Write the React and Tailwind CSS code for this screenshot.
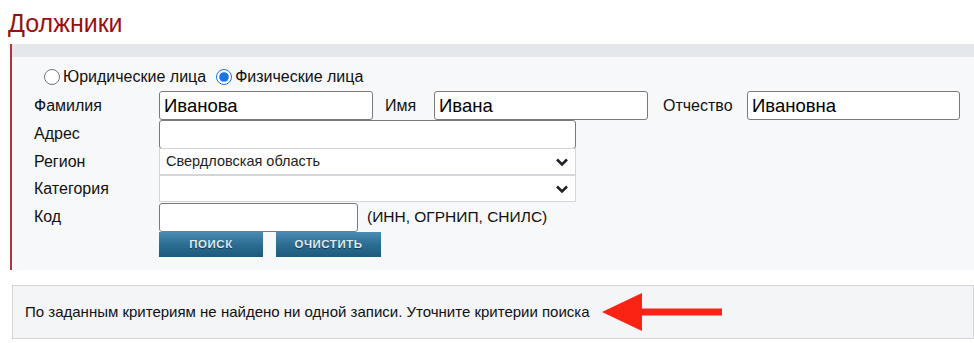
import React, { useState } from 'react';

const labelCls = 'w-[125px] shrink-0 text-[16px] text-[#111]';
const inputCls =
  'h-[29px] border border-[#7a7a7a] rounded-[3px] bg-white px-[4px] text-[18.5px] text-black outline-none';

const Select = ({ value, width }) => (
  <div
    className={`${width} h-[27px] border border-[#d4d6da] bg-white flex items-center justify-between pl-[6px] pr-[6px] text-[14.5px] text-[#222]`}
  >
    <span>{value}</span>
    <svg width="14" height="10" viewBox="0 0 14 10">
      <path d="M2 2.5 L7 7.5 L12 2.5" fill="none" stroke="#222" strokeWidth="2.6" />
    </svg>
  </div>
);

const Button = ({ children, width }) => (
  <button
    className={`${width} h-[25px] bg-gradient-to-b from-[#4a8cb4] via-[#2c6d93] to-[#1d5a7c] text-[#dfe8ee] text-[11.5px] font-bold tracking-[0.5px] [text-shadow:0_1px_1px_rgba(0,0,0,0.5)]`}
  >
    {children}
  </button>
);

export default function App() {
  const [type, setType] = useState('fiz');

  return (
    <div className="w-[974px] h-[343px] bg-white overflow-hidden" style={{ fontFamily: '"Liberation Sans", Arial, sans-serif' }}>
      {/* Title */}
      <h1 className="h-[44px] pl-[8px] pt-[8px] text-[25px] leading-[30px] text-[#990f0f]">
        Должники
      </h1>

      {/* Search panel */}
      <div className="ml-[10px] border-l-2 border-[#b7323a]">
        <div className="h-[13px] bg-[#e4e7eb]" />
        <div className="bg-[#f7f8fa] pl-[22px] pt-[7px] h-[213px]">
          {/* Radios */}
          <div className="flex items-center h-[26px] pl-[10px] text-[16px] text-[#111]">
            <label className="flex items-center gap-[3px] mr-[10px]">
              <input type="radio" name="t" checked={type === 'ur'} onChange={() => setType('ur')} className="w-[16px] h-[16px] m-0 accent-[#1a73e8]" />
              Юридические лица
            </label>
            <label className="flex items-center gap-[3px]">
              <input type="radio" name="t" checked={type === 'fiz'} onChange={() => setType('fiz')} className="w-[16px] h-[16px] m-0 accent-[#1a73e8]" />
              Физические лица
            </label>
          </div>

          <div className="mt-[1px]">
            {/* ФИО */}
            <div className="flex items-center h-[29px]">
              <span className={labelCls}>Фамилия</span>
              <input className={`${inputCls} w-[214px]`} defaultValue="Иванова" />
              <span className="w-[61px] pl-[12px] text-[16px] text-[#111]">Имя</span>
              <input className={`${inputCls} w-[214px]`} defaultValue="Ивана" />
              <span className="w-[99px] pl-[15px] text-[16px] text-[#111]">Отчество</span>
              <input className={`${inputCls} w-[213px]`} defaultValue="Ивановна" />
            </div>

            {/* Адрес */}
            <div className="flex items-center h-[28px]">
              <span className={labelCls}>Адрес</span>
              <input className={`${inputCls} h-[28px] w-[417px]`} />
            </div>

            {/* Регион */}
            <div className="flex items-center h-[27px]">
              <span className={labelCls}>Регион</span>
              <Select value="Свердловская область" width="w-[417px]" />
            </div>

            {/* Категория */}
            <div className="flex items-center h-[27px]">
              <span className={labelCls}>Категория</span>
              <Select value="" width="w-[417px]" />
            </div>

            {/* Код */}
            <div className="flex items-center h-[28px] mt-[1px]">
              <span className={labelCls}>Код</span>
              <input className={`${inputCls} h-[28px] w-[199px]`} />
              <span className="ml-[9px] text-[15.5px] text-[#111]">(ИНН, ОГРНИП, СНИЛС)</span>
            </div>

            {/* Buttons */}
            <div className="flex items-center gap-[13px] pl-[125px] mt-[1px]">
              <Button width="w-[104px]">ПОИСК</Button>
              <Button width="w-[105px]">ОЧИСТИТЬ</Button>
            </div>
          </div>
        </div>
      </div>

      {/* Result message */}
      <div className="ml-[12px] mt-[15px] h-[54px] border border-[#d3d5d8] bg-[#f4f5f6] flex items-center pl-[12px] text-[15px] text-[#111]">
        <span>По заданным критериям не найдено ни одной записи. Уточните критерии поиска</span>
        <svg className="ml-[12px]" width="122" height="40" viewBox="0 0 122 40">
          <polygon points="0,20 40,1 40,16.5 120,16.5 120,23.5 40,23.5 40,39" fill="#fb2414" />
        </svg>
      </div>
    </div>
  );
}
